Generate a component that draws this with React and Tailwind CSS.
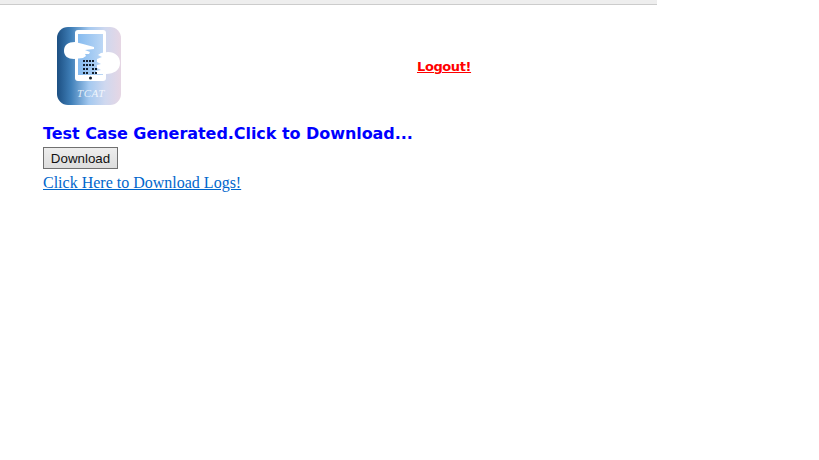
import React from 'react';

const Logo = () => (
  <svg width="64" height="78" viewBox="0 0 64 78" className="block">
    <defs>
      <linearGradient id="tcat" x1="0" y1="0" x2="1" y2="0">
        <stop offset="0" stopColor="#1c4f82" />
        <stop offset="0.22" stopColor="#3f7fb8" />
        <stop offset="0.5" stopColor="#a4c9f0" />
        <stop offset="0.75" stopColor="#cfd8ef" />
        <stop offset="1" stopColor="#e6d6e4" />
      </linearGradient>
      <linearGradient id="screen" x1="0" y1="0" x2="1" y2="0">
        <stop offset="0" stopColor="#86bbef" />
        <stop offset="1" stopColor="#bcd7f5" />
      </linearGradient>
    </defs>
    <rect width="64" height="78" rx="11" fill="url(#tcat)" />
    {/* phone */}
    <rect x="18" y="3" width="31" height="51" rx="3" fill="#fff" />
    <rect x="21" y="7" width="25" height="41" fill="url(#screen)" />
    {/* left hand */}
    <path d="M7 24 C7 18 11 15 18 15 L26 17 L37 20 L37 22 L28 23 L33 25 L32 27 L28 27 L29 29 L26 31 L17 32 C11 32 7 29 7 24Z" fill="#fff" />
    {/* right hand */}
    <path d="M63 36 C63 43 57 47 49 47 L39 47 L39 44 L44 43 L40 41 L40 38 L44 37 L40 35 L40 32 L45 30 L41 28 L44 26 L51 25 C58 25 63 29 63 36Z" fill="#fff" />
    <g fill="#14202e">
      <rect x="26" y="33" width="2" height="2" /><rect x="29" y="33" width="2" height="2" /><rect x="32" y="33" width="2" height="2" /><rect x="35" y="33" width="2" height="2" />
      <rect x="26" y="37" width="2" height="2" /><rect x="29" y="37" width="2" height="2" /><rect x="32" y="37" width="2" height="2" /><rect x="35" y="37" width="2" height="2" />
      <rect x="26" y="41" width="2" height="2" /><rect x="29" y="41" width="2" height="2" /><rect x="35" y="41" width="2" height="2" /><rect x="38" y="41" width="2" height="2" />
      <rect x="26" y="45" width="2" height="2" /><rect x="29" y="45" width="2" height="2" /><rect x="35" y="45" width="2" height="2" /><rect x="38" y="45" width="2" height="2" />
      <circle cx="33.500" cy="51" r="1.500" />
    </g>
    <text x="34" y="70" textAnchor="middle" fontFamily="Liberation Serif, serif" fontStyle="italic" fontSize="11" letterSpacing="0.500" fill="#fff" fillOpacity="0.8">TCAT</text>
  </svg>
);

const App = () => {
  return (
    <div className="w-[819px] h-[460px] bg-white overflow-hidden">
      <div className="w-[657px] h-[5px] bg-[#eeeeee] border-b border-[#cccccc]"></div>

      <div className="pl-[43px]">
        <div className="flex items-start pt-[22px]">
          <div className="pl-[14px]">
            <Logo />
          </div>
          <a href="#" className="ml-[296px] mt-[32px] font-['DejaVu_Sans',sans-serif] text-[13px] tracking-[-0.4px] leading-[16px] font-bold text-[#ff0000] underline">
            Logout!
          </a>
        </div>

        <h3 className="mt-[18px] font-['DejaVu_Sans',sans-serif] text-[16px] tracking-[-0.05px] leading-[22px] font-bold text-[#0000ff]">
          Test Case Generated.Click to Download...
        </h3>

        <button className="block mt-[2px] w-[75px] h-[22px] pt-[1px] font-['Liberation_Sans',sans-serif] text-[13.33px] leading-[18px] text-[#111111] bg-gradient-to-b from-[#ededed] to-[#dddddd] border border-[#707070]">
          Download
        </button>

        <a href="#" className="block mt-[4px] font-['Liberation_Serif',serif] text-[16px] leading-[19px] text-[#0066cc] underline">
          Click Here to Download Logs!
        </a>
      </div>
    </div>
  );
};

export default App;
